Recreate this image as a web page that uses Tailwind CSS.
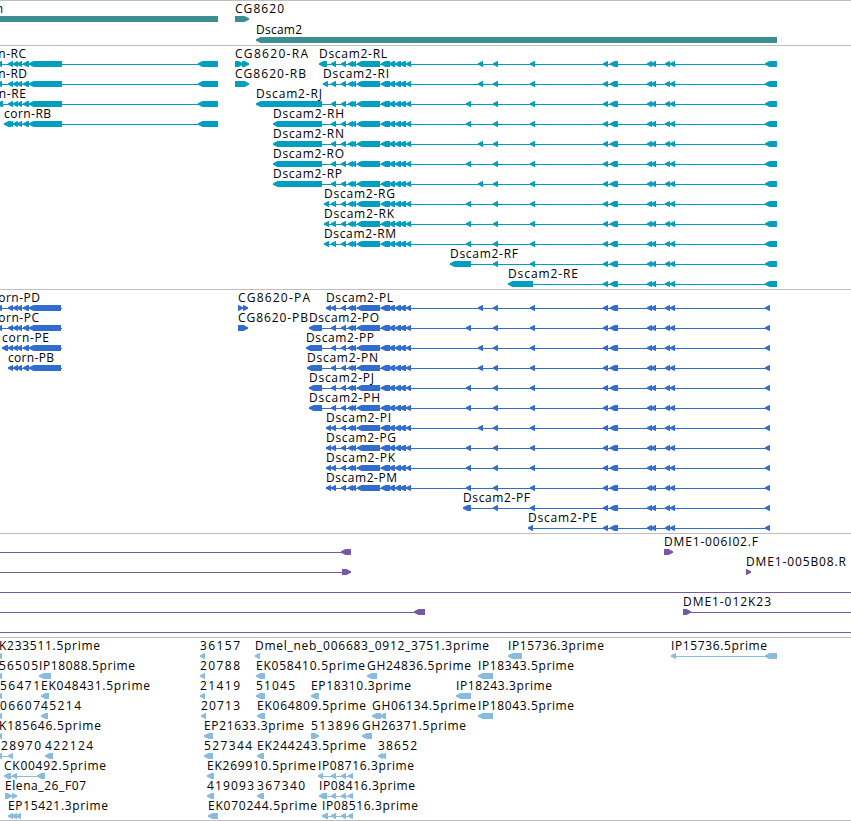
<!DOCTYPE html>
<html lang="en">
<head>
    <meta charset="UTF-8">
    <meta name="viewport" content="width=device-width, initial-scale=1.0">
    <title>Genome Browser - Dscam2</title>
    <script src="https://cdn.jsdelivr.net/npm/@tailwindcss/browser@4"></script>
</head>
<body class="bg-white overflow-hidden">
    <main class="flex flex-col w-[851px] h-[821px] font-['Open_Sans',sans-serif] text-[12px] text-black">
        <!-- Genes -->
        <section class="h-[45px] border-t border-[#bebebe] text-[#3d8e93]">
            <svg id="genes" class="block w-full h-full" fill="currentColor"></svg>
        </section>

        <!-- Transcripts -->
        <section class="h-[244px] border-t border-[#bebebe] text-[#009fc0]">
            <svg id="transcripts" class="block w-full h-full" fill="currentColor"></svg>
        </section>

        <!-- Proteins -->
        <section class="h-[244px] border-t border-[#bebebe] text-[#316dce]">
            <svg id="proteins" class="block w-full h-full" fill="currentColor"></svg>
        </section>

        <!-- Clones -->
        <section class="h-[104px] border-t border-[#bebebe] text-[#7558a6]">
            <svg id="clones" class="block w-full h-full" fill="currentColor"></svg>
        </section>

        <!-- ESTs -->
        <section class="h-[184px] border-y border-[#bebebe] text-[#87bcde]">
            <svg id="ests" class="block w-full h-full" fill="currentColor"></svg>
        </section>
    </main>

    <script>
        const NS = 'http://www.w3.org/2000/svg';

        // Exons shared by the Dscam2 isoforms
        const NEAR = [[331, 336], [341, 346], [348, 353], [351, 356], [357, 380], [381, 390], [389, 395], [395, 401], [400, 406], [406, 411]];
        const FAR = [[603, 608], [610, 618], [647, 652], [651, 656], [665, 670], [670, 675]];
        const CORN = [[8, 13], [13, 18], [17, 22], [23, 29], [29, 62]];

        function isoform(start, alt, last) {
            return [start, ...NEAR, [alt, alt + 5], [493, 498], [530, 535], ...FAR, last];
        }

        // A feature is: row, label, label start, label end, blocks, strand, line span
        const RNA_END = [765, 777];
        const CDS_END = [765, 770];
        const tracks = {
            genes: [
                [0, 'corn', -25, 3, [[-20, 218]], -1],
                [0, 'CG8620', 235, 284, [[235, 249]], 1],
                [1.05, 'Dscam2', 256, 302, [[256, 777]], -1]
            ],
            transcripts: [
                [0, 'corn-RC', -21, 26, [[-3, 2], ...CORN, [198, 218]], -1],
                [1, 'corn-RD', -21, 27, [[-3, 2], ...CORN, [198, 218]], -1],
                [2, 'corn-RE', -21, 26, [[-3, 3], ...CORN, [198, 218]], -1],
                [3, 'corn-RB', 4, 51, [[4, 11], ...CORN, [198, 218]], -1],
                [0, 'CG8620-RA', 235, 308, [[235, 243], [242, 249]], 1],
                [1, 'CG8620-RB', 235, 306, [[235, 249]], 1],
                [0, 'Dscam2-RL', 319, 387, isoform([319, 327], 478, RNA_END), -1],
                [1, 'Dscam2-RI', 323, 389, isoform([323, 328], 478, RNA_END), -1],
                [2, 'Dscam2-RJ', 256, 322, isoform([256, 322], 466, RNA_END), -1],
                [3, 'Dscam2-RH', 273, 344, isoform([273, 322], 466, RNA_END), -1],
                [4, 'Dscam2-RN', 273, 344, isoform([273, 322], 478, RNA_END), -1],
                [5, 'Dscam2-RO', 273, 344, isoform([273, 322], 466, RNA_END), -1],
                [6, 'Dscam2-RP', 273, 342, isoform([273, 322], 478, RNA_END), -1],
                [7, 'Dscam2-RG', 324, 395, isoform([324, 329], 466, RNA_END), -1],
                [8, 'Dscam2-RK', 324, 394, isoform([324, 329], 466, RNA_END), -1],
                [9, 'Dscam2-RM', 324, 396, isoform([324, 329], 466, RNA_END), -1],
                [10, 'Dscam2-RF', 450, 518, [[450, 471], [493, 498], [530, 535], ...FAR, RNA_END], -1],
                [11, 'Dscam2-RE', 508, 578, [[508, 533], ...FAR, RNA_END], -1]
            ],
            proteins: [
                [0, 'corn-PD', -8, 40, [[-3, 2], ...CORN.slice(0, 4), [29, 61]], -1, [0, 62]],
                [1, 'corn-PC', -8, 39, [[-3, 2], ...CORN.slice(0, 4), [29, 61]], -1, [0, 62]],
                [2, 'corn-PE', 2, 49, [[2, 8], ...CORN.slice(0, 4), [29, 61]], -1, [2, 62]],
                [3, 'corn-PB', 8, 54, [...CORN.slice(0, 4), [29, 61]], -1, [8, 62]],
                [0, 'CG8620-PA', 238, 310, [[238, 243], [243, 248]], 1],
                [1, 'CG8620-PB', 238, 308, [[238, 248]], 1],
                [0, 'Dscam2-PL', 326, 393, isoform([326, 331], 478, CDS_END), -1],
                [1, 'Dscam2-PO', 309, 379, isoform([309, 322], 466, CDS_END), -1],
                [2, 'Dscam2-PP', 306, 374, isoform([306, 322], 478, CDS_END), -1],
                [3, 'Dscam2-PN', 307, 378, isoform([307, 322], 478, CDS_END), -1],
                [4, 'Dscam2-PJ', 309, 374, isoform([309, 322], 466, CDS_END), -1],
                [5, 'Dscam2-PH', 309, 380, isoform([309, 322], 466, CDS_END), -1],
                [6, 'Dscam2-PI', 326, 391, isoform([326, 331], 478, CDS_END), -1],
                [7, 'Dscam2-PG', 326, 396, isoform([326, 331], 466, CDS_END), -1],
                [8, 'Dscam2-PK', 326, 395, isoform([326, 331], 466, CDS_END), -1],
                [9, 'Dscam2-PM', 326, 397, isoform([326, 331], 466, CDS_END), -1],
                [10, 'Dscam2-PF', 463, 530, [[463, 471], [493, 498], [530, 535], ...FAR, CDS_END], -1],
                [11, 'Dscam2-PE', 528, 597, [[528, 533], ...FAR, CDS_END], -1]
            ],
            clones: [
                [0, '', 0, 0, [[341, 351]], -1, [0, 351]],
                [1, '', 0, 0, [[342, 351]], 1, [0, 351]],
                [2, '', 0, 0, [], 1, [0, 851]],
                [3, '', 0, 0, [[414, 425]], -1, [0, 425]],
                [4, '', 0, 0, [], 1, [0, 851]],
                [0, 'DME1-006I02.F', 664, 758, [[664, 673]], 1],
                [1, 'DME1-005B08.R', 746, 846, [[746, 751]], 1],
                [3, 'DME1-012K23', 683, 771, [[683, 691]], 1, [683, 851]]
            ],
            ests: [
                [0, 'K233511.5prime', -1, 100, [[-3, 2]], -1],
                [1, '56505', -1, 38, [[-3, 2]], -1],
                [2, '56471', 0, 40, [[-3, 2]], -1],
                [3, '06607', 0, 40, [[-3, 2]], -1],
                [4, 'K185646.5prime', -1, 101, [[-3, 2]], -1],
                [5, '28970', 1, 41, [[-3, 2], [8, 13]], -1],
                [6, 'CK00492.5prime', 4, 106, [[4, 11], [12, 17], [37, 45]], -1],
                [7, 'Elena_26_F07', 5, 86, [[5, 12], [12, 17]], 1],
                [8, 'EP15421.3prime', 8, 108, [[8, 13], [12, 17], [16, 21]], -1],
                [1, 'IP18088.5prime', 39, 135, [[39, 51]], -1],
                [2, 'EK048431.5prime', 41, 150, [[41, 49]], -1],
                [3, '45214', 41, 81, [[41, 48]], -1],
                [5, '422124', 45, 93, [[45, 53]], -1],
                [0, '36157', 200, 240, [[200, 205]], -1],
                [1, '20788', 200, 240, [[200, 205]], -1],
                [2, '21419', 200, 240, [[200, 205]], -1],
                [3, '20713', 201, 240, [[201, 206]], -1],
                [4, 'EP21633.3prime', 204, 304, [[204, 213]], -1],
                [5, '527344', 204, 252, [[204, 213]], -1],
                [6, 'EK269910.5prime', 207, 316, [[207, 214]], -1],
                [7, '419093', 207, 254, [[207, 214]], -1],
                [8, 'EK070244.5prime', 208, 317, [[208, 218]], -1],
                [0, 'Dmel_neb_006683_0912_3751.3prime', 255, 489, [[255, 260]], -1],
                [1, 'EK058410.5prime', 256, 365, [[256, 265]], -1],
                [2, '51045', 256, 295, [[256, 265]], -1],
                [3, 'EK064809.5prime', 257, 366, [[257, 265]], -1],
                [5, 'EK244243.5prime', 257, 366, [[257, 264]], -1],
                [7, '367340', 257, 305, [[257, 264]], -1],
                [2, 'EP18310.3prime', 311, 411, [[311, 319]], -1],
                [4, '513896', 311, 359, [[311, 319]], 1],
                [6, 'IP08716.3prime', 318, 414, [[318, 323], [331, 336], [341, 346], [348, 353]], -1],
                [7, 'IP08416.3prime', 319, 415, [[319, 327], [331, 336], [341, 346], [348, 353]], -1],
                [8, 'IP08516.3prime', 322, 418, [[322, 328], [331, 336], [341, 346], [348, 353]], -1],
                [1, 'GH24836.5prime', 367, 471, [[367, 377]], -1],
                [3, 'GH06134.5prime', 372, 476, [[372, 381], [380, 386]], -1],
                [4, 'GH26371.5prime', 362, 466, [[362, 372]], -1],
                [5, '38652', 378, 417, [[378, 383], [381, 386]], -1],
                [2, 'IP18243.3prime', 456, 552, [[456, 471]], -1],
                [1, 'IP18343.5prime', 478, 574, [[478, 493]], -1],
                [3, 'IP18043.5prime', 478, 574, [[478, 493]], -1],
                [0, 'IP15736.3prime', 508, 604, [[508, 522]], -1],
                [0, 'IP15736.5prime', 671, 767, [[671, 676], [765, 777]], -1]
            ]
        };

        function add(svg, name, attrs) {
            const el = document.createElementNS(NS, name);
            for (const key in attrs) el.setAttribute(key, attrs[key]);
            svg.appendChild(el);
            return el;
        }

        // Block with a 5px arrow head on the side its strand points to
        function arrow(svg, x1, x2, y, strand) {
            const tip = strand < 0 ? x1 : x2;
            const back = strand < 0 ? x2 : x1;
            const neck = tip - strand * 4.5;
            const mid = tip - strand * 1.5;
            add(svg, 'polygon', {
                points: `${tip},${y + 2.3} ${mid},${y + 1.5} ${neck},${y} ${back},${y} ${back},${y + 6} ${neck},${y + 6} ${mid},${y + 4.6} ${tip},${y + 3.8}`
            });
        }

        for (const id in tracks) {
            const svg = document.getElementById(id);
            for (const [row, label, start, end, blocks, strand, span] of tracks[id]) {
                const y = 15 + row * 20;
                const [from, to] = span || [blocks[0][0], blocks[blocks.length - 1][1]];
                add(svg, 'rect', { x: from, y: y + 3, width: to - from, height: 1, 'shape-rendering': 'crispEdges' });
                for (const [x1, x2] of blocks) arrow(svg, x1, x2, y, strand);
                if (label) {
                    const text = add(svg, 'text', { x: start, y: y - 3, class: 'fill-black', textLength: end - start });
                    text.textContent = label;
                }
            }
        }
    </script>
</body>
</html>
